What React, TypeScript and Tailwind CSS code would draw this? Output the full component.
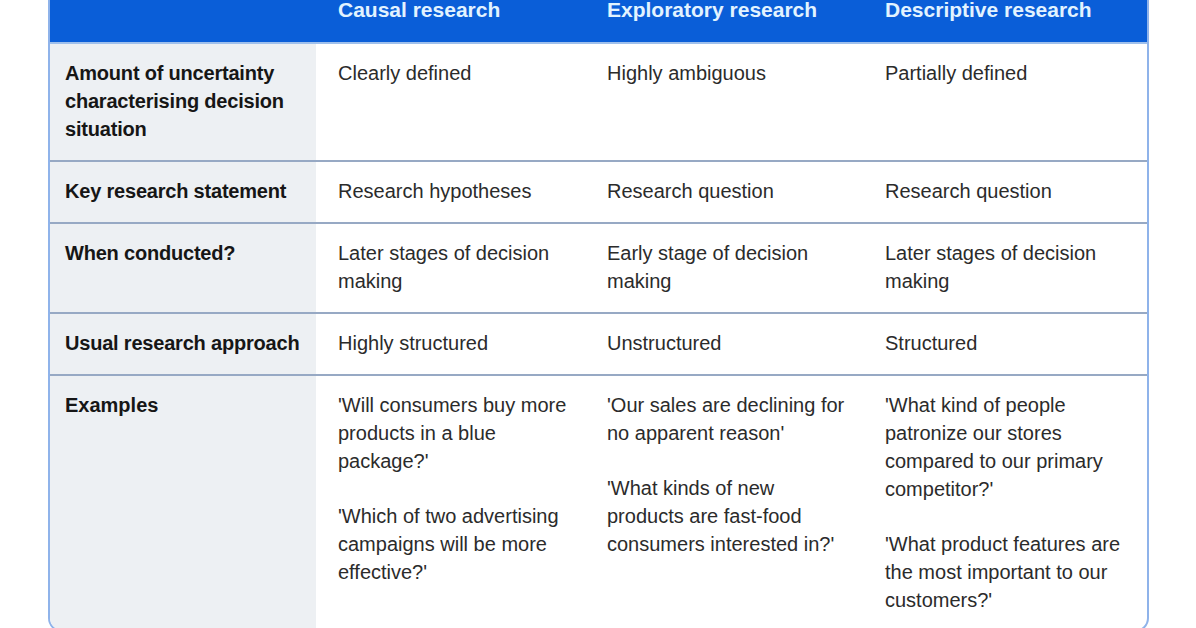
import React from "react";

const rows: { label: string; cells: string[] }[] = [
  {
    label: "Amount of uncertainty characterising decision situation",
    cells: ["Clearly defined", "Highly ambiguous", "Partially defined"],
  },
  {
    label: "Key research statement",
    cells: ["Research hypotheses", "Research question", "Research question"],
  },
  {
    label: "When conducted?",
    cells: [
      "Later stages of decision making",
      "Early stage of decision making",
      "Later stages of decision making",
    ],
  },
  {
    label: "Usual research approach",
    cells: ["Highly structured", "Unstructured", "Structured"],
  },
];

const examples: string[][] = [
  [
    "'Will consumers buy more products in a blue package?'",
    "'Which of two advertising campaigns will be more effective?'",
  ],
  [
    "'Our sales are declining for no apparent reason'",
    "'What kinds of new products are fast-food consumers interested in?'",
  ],
  [
    "'What kind of people patronize our stores compared to our primary competitor?'",
    "'What product features are the most important to our customers?'",
  ],
];

export default function App() {
  return (
    <div
      className="w-[1196px] h-[628px] overflow-hidden bg-white"
      style={{ fontFamily: '"Liberation Sans", Arial, sans-serif' }}
    >
      <div className="ml-[48px] -mt-[24px] w-[1101px] border-2 border-[#8fb3ea] rounded-[14px] overflow-hidden">
        {/* Header */}
        <div className="grid grid-cols-[266px_269px_278px_1fr] bg-[#0a5ed8] text-[#e2f3ff] font-bold text-[21px] leading-[28px]">
          <div className="pt-[18px] pb-[18px]"></div>
          <div className="pl-[22px] pt-[18px] pb-[18px]">Causal research</div>
          <div className="pl-[22px] pt-[18px] pb-[18px]">Exploratory research</div>
          <div className="pl-[22px] pt-[18px] pb-[18px]">Descriptive research</div>
        </div>
        {rows.map((r, i) => (
          <div
            key={i}
            className={`grid grid-cols-[266px_269px_278px_1fr] text-[20px] leading-[28px] border-t-2 ${
              i === 0 ? "border-[#9fc0ec]" : "border-[#97a9c4]"
            }`}
          >
            <div className="bg-[#edf0f3] pl-[15px] pr-[2px] pt-[15px] pb-[17px] font-bold text-[#161616] tracking-[-0.2px]">
              {r.label}
            </div>
            {r.cells.map((c, j) => (
              <div key={j} className="pl-[22px] pr-[14px] pt-[15px] pb-[17px] text-[#2b2b2b]">
                {c}
              </div>
            ))}
          </div>
        ))}
        <div className="grid grid-cols-[266px_269px_278px_1fr] text-[20px] leading-[28px] border-t-2 border-[#97a9c4]">
          <div className="bg-[#edf0f3] pl-[15px] pt-[15px] pb-[16px] font-bold text-[#161616]">
            Examples
          </div>
          {examples.map((col, j) => (
            <div
              key={j}
              className="pl-[22px] pr-[14px] pt-[15px] pb-[16px] text-[#2b2b2b] flex flex-col gap-[27px]"
            >
              {col.map((p, k) => (
                <p key={k}>{p}</p>
              ))}
            </div>
          ))}
        </div>
      </div>
    </div>
  );
}
